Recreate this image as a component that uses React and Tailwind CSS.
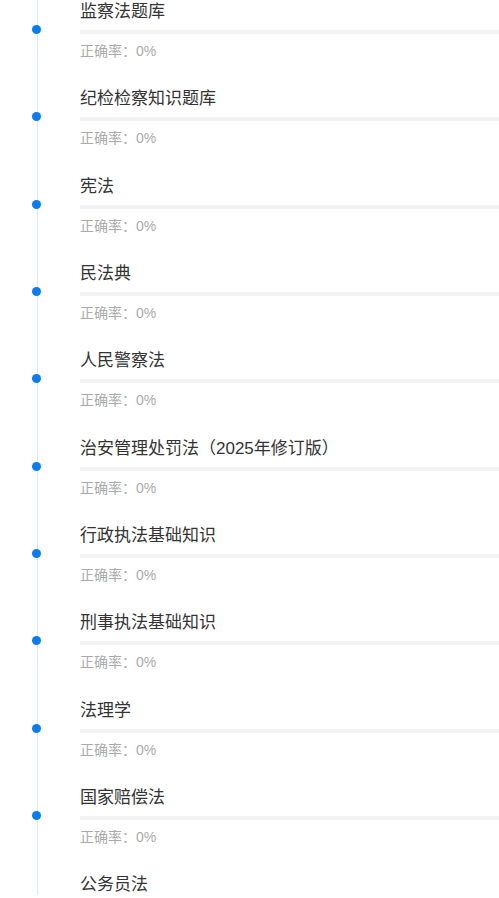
import React from "react";

const items = [
  "监察法题库",
  "纪检检察知识题库",
  "宪法",
  "民法典",
  "人民警察法",
  "治安管理处罚法（2025年修订版）",
  "行政执法基础知识",
  "刑事执法基础知识",
  "法理学",
  "国家赔偿法",
  "公务员法",
];

export default function App() {
  return (
    <div
      className="relative h-[898px] w-[499px] overflow-hidden bg-white"
      style={{ fontFamily: '"Liberation Sans", "Noto Sans CJK SC", sans-serif' }}
    >
      <div className="absolute left-[37px] top-0 h-[895px] w-px bg-[#d6e8fa]" />
      <div className="flex flex-col">
        {items.map((t) => (
          <div key={t} className="flex h-[87.33px] shrink-0">
            <div className="relative w-[80px] shrink-0">
              <div className="absolute left-[32px] top-[25px] h-[9px] w-[9px] rounded-full bg-[#0a7cf0]" />
            </div>
            <div className="flex-1">
              <div className="h-[24px] text-[17px] leading-[24px] text-[#333333]">{t}</div>
              <div className="mt-[6px] h-[4px] w-full bg-[#f3f3f3]" />
              <div className="mt-[7px] text-[14px] leading-[20px] text-[#aaaaaa]">正确率：0%</div>
            </div>
          </div>
        ))}
      </div>
    </div>
  );
}
